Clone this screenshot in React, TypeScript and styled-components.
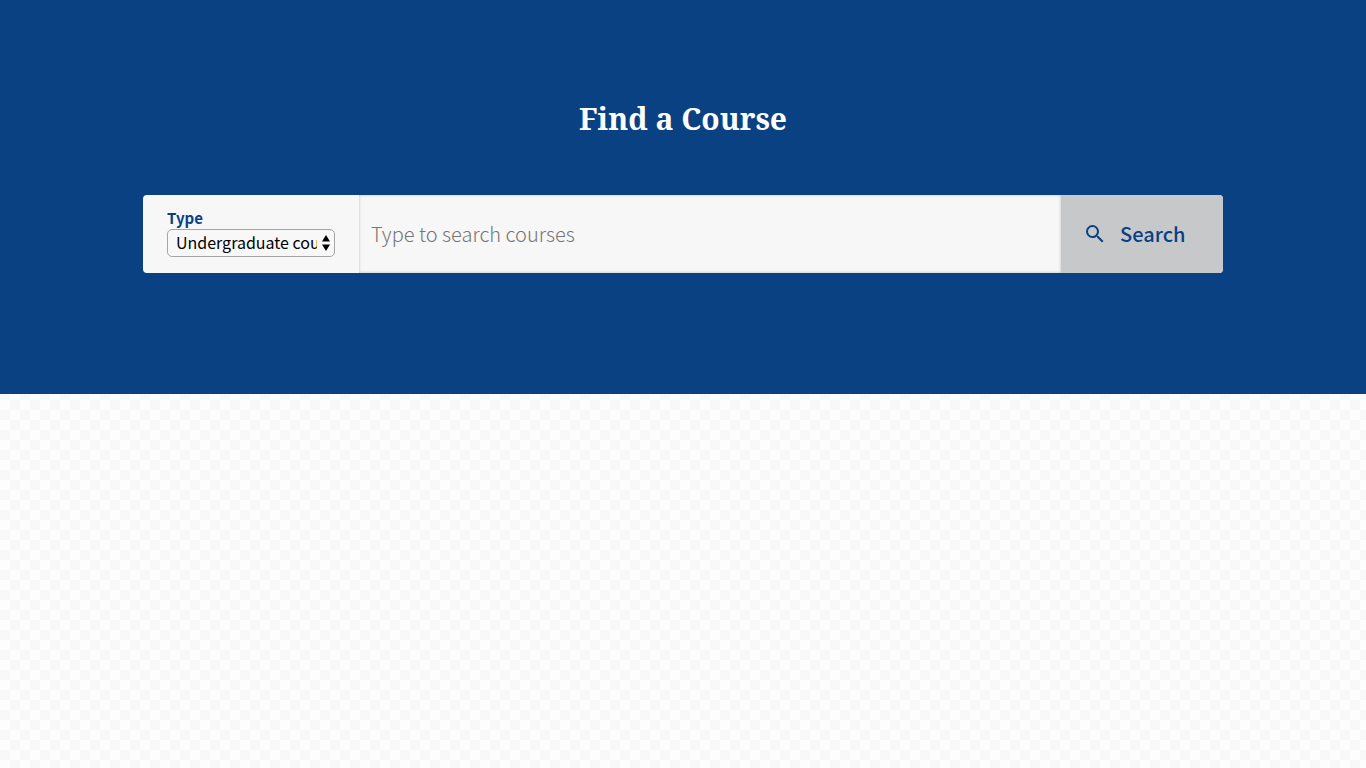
import React from "react";
import styled, { createGlobalStyle } from "styled-components";

const sans = '"Noto Sans CJK SC", "Noto Sans", sans-serif';
const navy = "#0a4182";

const GlobalStyle = createGlobalStyle`
  *, *::before, *::after { box-sizing: border-box; }
  body {
    margin: 0;
    font-family: ${sans};
    background: repeating-conic-gradient(#f8f8f8 0 25%, #fdfdfd 0 50%) 0 0 / 20px 20px;
  }
`;

const Hero = styled.section`
  background: ${navy};
  padding: 96px 24px 121px;
`;

const Title = styled.h1`
  margin: 0 0 53px;
  color: #fff;
  font: 700 30px/46px "Noto Serif", "Droid Serif", "Noto Serif CJK SC", "Liberation Serif", serif;
  text-align: center;
`;

const SearchForm = styled.form`
  display: flex;
  max-width: 1080px;
  min-height: 78px;
  margin: 0 auto;
  border-radius: 4px;
  overflow: hidden;
  background: #f7f7f7;
`;

const TypeField = styled.div`
  flex: 0 0 20%;
  display: flex;
  flex-direction: column;
  justify-content: center;
  padding: 0 24px 2px;
`;

const Label = styled.label`
  padding-bottom: 2px;
  color: ${navy};
  font-size: 15px;
  font-weight: 700;
  line-height: 18px;
`;

const SelectWrap = styled.div`
  position: relative;
`;

const Select = styled.select`
  display: block;
  width: 100%;
  height: 28px;
  padding: 0 17px 2px 8px;
  border: 1px solid #a5a5a5;
  border-radius: 5px;
  background: #f8f8f8;
  color: #000;
  font: 400 16px/24px ${sans};
  appearance: none;
`;

const Arrows = styled.svg`
  position: absolute;
  top: 6px;
  right: 4px;
  pointer-events: none;
`;

const SearchInput = styled.input`
  flex: 1;
  min-width: 0;
  padding: 0 12px;
  border: 0;
  border-radius: 0;
  background: #f7f7f7;
  box-shadow: inset 0 0 3px rgba(0, 0, 0, 0.25);
  color: #333;
  font: 300 20px/30px ${sans};
  &::placeholder { color: #757575; opacity: 1; }
`;

const SearchButton = styled.button`
  flex: 0 0 15%;
  display: flex;
  align-items: center;
  gap: 13px;
  padding: 0 22px;
  border: 0;
  background: #c7c8ca;
  color: ${navy};
  font: 500 20px/30px ${sans};
`;

export default function App() {
  return (
    <>
      <GlobalStyle />
      <Hero>
        <Title>Find a Course</Title>
        <SearchForm role="search" onSubmit={(e: React.FormEvent) => e.preventDefault()}>
          <TypeField>
            <Label htmlFor="type">Type</Label>
            <SelectWrap>
              <Select id="type" name="type">
                <option>Undergraduate courses</option>
                <option>Postgraduate courses</option>
              </Select>
              <Arrows width="10" height="16" viewBox="0 0 10 16" aria-hidden="true">
                <path d="M5 0L9 6.5H1zM5 16L1 9.5h8z" fill="#000" />
              </Arrows>
            </SelectWrap>
          </TypeField>
          <SearchInput type="search" aria-label="Search courses" placeholder="Type to search courses" />
          <SearchButton type="submit">
            <svg width="24" height="24" viewBox="0 0 24 24" fill="currentColor" aria-hidden="true">
              <path d="M15.5 14h-.79l-.28-.27A6.471 6.471 0 0 0 16 9.5 6.5 6.5 0 1 0 9.5 16c1.61 0 3.09-.59 4.23-1.57l.27.28v.79l5 4.99L20.49 19l-4.99-5zm-6 0C7.01 14 5 11.99 5 9.5S7.01 5 9.5 5 14 7.01 14 9.5 11.99 14 9.5 14z" />
            </svg>
            Search
          </SearchButton>
        </SearchForm>
      </Hero>
    </>
  );
}
